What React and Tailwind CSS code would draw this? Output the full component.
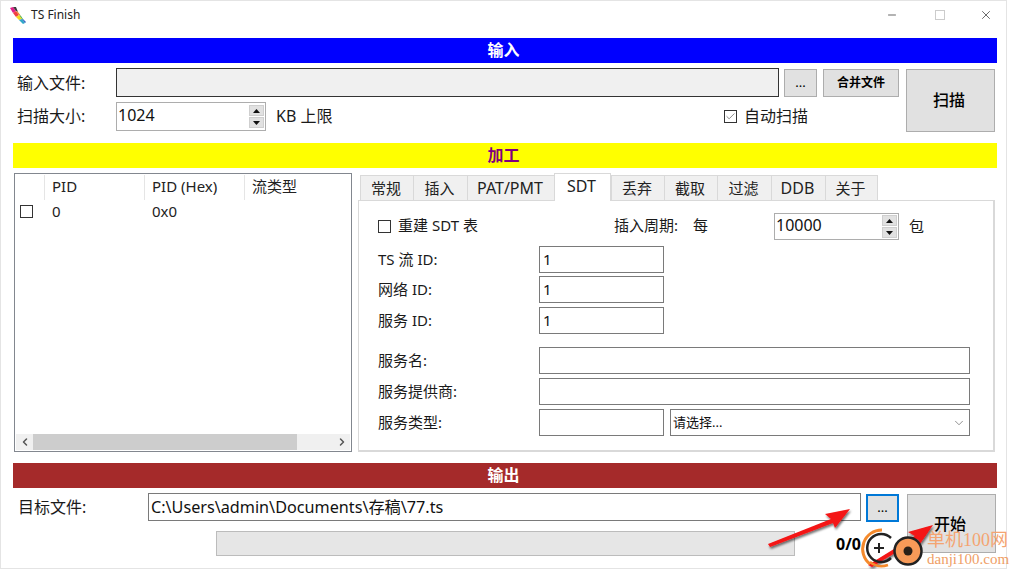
import React from 'react';
import { ChevronDown, ChevronLeft, ChevronRight, Check, Minus, X } from 'lucide-react';

const tabs = [
  { label: '常规', w: 'w-[53px]', size: 'text-[15px]' },
  { label: '插入', w: 'w-[54px]', size: 'text-[15px]' },
  { label: 'PAT/PMT', w: 'w-[87px]', size: 'text-[16px]' },
  { label: 'SDT', w: 'w-[57px]', size: 'text-[16px]', active: true },
  { label: '丢弃', w: 'w-[53px]', size: 'text-[15px]' },
  { label: '截取', w: 'w-[53px]', size: 'text-[15px]' },
  { label: '过滤', w: 'w-[54px]', size: 'text-[15px]' },
  { label: 'DDB', w: 'w-[54px]', size: 'text-[16px]' },
  { label: '关于', w: 'w-[53px]', size: 'text-[15px]' },
];

const SectionBar = ({ className, children }) => (
  <div className={`h-[25px] flex items-center justify-center pr-[3px] pb-[2px] text-[16px] font-bold ${className}`}>{children}</div>
);

const Logo = () => (
  <svg width="16" height="17" viewBox="0 0 16 17" className="shrink-0">
    <polygon points="0,1 3,0 6,4 3,6" fill="#e0218a" />
    <polygon points="3,0 6,0 8,5 6,4" fill="#3a3a3a" />
    <polygon points="3,6 6,4 9,8 6,10" fill="#f04040" />
    <polygon points="6,4 8,5 11,9 9,8" fill="#f08a20" />
    <polygon points="6,10 9,8 12,12 9,13" fill="#f5d820" />
    <polygon points="9,8 11,9 13,12 12,12" fill="#50b848" />
    <polygon points="9,13 12,12 15,16 13,17" fill="#30a8c8" />
    <polygon points="12,12 13,12 16,15 15,16" fill="#3060c0" />
  </svg>
);

const Arrow = ({ up }) => (
  <svg width="7" height="4" viewBox="0 0 7 4">
    <polygon points={up ? '3.5,0 7,4 0,4' : '0,0 7,0 3.5,4'} fill="#111" />
  </svg>
);

const Spinner = ({ value, w, h }) => (
  <div className={`${w} ${h} border border-[#adadad] bg-white flex items-center pl-px pr-px`}>
    <span className="flex-1 pb-[4px] text-[16px] text-[#111]">{value}</span>
    <div className="flex flex-col gap-px">
      <div className="w-[15px] h-[11px] bg-[#e1e1e1] border border-[#cfcfcf] flex items-center justify-center"><Arrow up /></div>
      <div className="w-[15px] h-[11px] bg-[#e1e1e1] border border-[#cfcfcf] flex items-center justify-center"><Arrow /></div>
    </div>
  </div>
);

const CheckBox = ({ checked }) => (
  <div className="w-[13px] h-[13px] border border-[#333] bg-white shrink-0 flex items-center justify-center">
    {checked && <Check size={11} strokeWidth={1.5} className="text-[#555]" />}
  </div>
);

const Btn = ({ className, children }) => (
  <div className={`bg-[#e1e1e1] border border-[#adadad] flex items-center justify-center text-black ${className}`}>{children}</div>
);

const FormRow = ({ label, className, children }) => (
  <div className={`flex items-center h-[27px] ${className || ''}`}>
    <span className="w-[161px] shrink-0 text-[15px] text-[#1a1a1a]">{label}</span>
    {children}
  </div>
);

const Field = ({ value, w }) => (
  <div className={`${w} h-[27px] border border-[#7a7a7a] bg-white pl-[3px] text-[15px] leading-[24px] text-[#111]`}>{value}</div>
);

const Watermark = () => (
  <div className="absolute left-[760px] top-[500px] w-[250px] h-[69px] pointer-events-none">
    <svg width="250" height="69" viewBox="0 0 250 69" className="absolute left-0 top-0">
      <defs>
        <filter id="shadow" x="-20%" y="-40%" width="140%" height="200%">
          <feDropShadow dx="1" dy="2" stdDeviation="1.2" floodColor="#000" floodOpacity="0.55" />
        </filter>
      </defs>
      <polygon points="8,44 71,19 65,14 90,9 75,28 73,23 10,47" fill="#f41414" filter="url(#shadow)" />
      <polygon points="108,65 155,36 148,32 173,25 160,44 158,39 112,67" fill="#f41414" filter="url(#shadow)" />
      <path d="M122 30 A19 19 0 0 0 110 64" fill="none" stroke="#f58a2c" strokeWidth="3" />
      <path d="M110 62 A19 19 0 0 0 128 65" fill="none" stroke="#f58a2c" strokeWidth="2.5" />
      <path d="M131 58 A14 14 0 1 1 131 38" fill="none" stroke="#222" strokeWidth="2.5" />
      <path d="M114 48 H124 M119 43 V53" stroke="#222" strokeWidth="2" />
      <circle cx="148" cy="51" r="13.5" fill="#f79a58" stroke="#222" strokeWidth="2.5" />
      <circle cx="148" cy="51" r="4.5" fill="#2a2018" />
    </svg>
    <span className="absolute left-[167px] top-[27px] text-[18px] leading-[26px] whitespace-nowrap text-[#f4a471] font-['Liberation_Serif','Noto_Sans_CJK_SC',serif]">单机100网</span>
    <span className="absolute left-[167px] top-[50px] text-[15px] leading-[18px] whitespace-nowrap text-[#ef9e66] font-['Liberation_Serif',serif]">danji100.com</span>
  </div>
);

export default function App() {
  return (
    <div className="relative w-[1010px] h-[569px] overflow-hidden bg-white font-['Noto_Sans','Noto_Sans_CJK_SC',sans-serif]">
      <div className="w-[1007px] h-[569px] border border-[#e4e4e4] bg-white">
        {/* title bar */}
        <div className="h-[37px] flex items-start">
          <div className="flex items-center pl-[9px] pt-[5px]">
            <Logo />
            <span className="ml-[5px] text-[12px] text-[#222]">TS Finish</span>
          </div>
          <div className="ml-auto flex items-center pt-[7px] pr-[13px]">
            <Minus size={12} strokeWidth={1.2} className="text-black" />
            <div className="ml-[37px] w-[10px] h-[10px] border border-[#cccccc]" />
            <X size={14} strokeWidth={1} className="ml-[34px] text-black" />
          </div>
        </div>

        <div className="ml-[12px] w-[984px]">
          <SectionBar className="bg-[#0000ff] text-white">输入</SectionBar>

          <div className="flex mt-[5px]">
            <div className="w-[886px]">
              <div className="flex items-center h-[29px]">
                <span className="w-[103px] pl-[4px] text-[16px] text-[#1a1a1a]">输入文件:</span>
                <div className="w-[663px] h-[29px] border border-[#333] bg-[#f0f0f0]" />
                <Btn className="ml-[5px] w-[33px] h-[28px] text-[13px]">...</Btn>
                <Btn className="ml-[6px] w-[76px] h-[28px] text-[12px] font-bold">合并文件</Btn>
              </div>
              <div className="flex items-center h-[29px] mt-[5px]">
                <span className="w-[103px] pl-[4px] pb-[2px] text-[16px] text-[#1a1a1a]">扫描大小:</span>
                <Spinner value="1024" w="w-[150px]" h="h-[29px]" />
                <span className="ml-[10px] pb-[2px] text-[16px] text-[#1a1a1a]">KB 上限</span>
                <div className="ml-auto mr-[91px] flex items-center">
                  <CheckBox checked />
                  <span className="ml-[7px] pb-[2px] text-[16px] text-[#1a1a1a]">自动扫描</span>
                </div>
              </div>
            </div>
            <Btn className="ml-[7px] mt-px w-[89px] h-[63px] pr-[3px] pb-[2px] text-[16px] font-medium">扫描</Btn>
          </div>

          <SectionBar className="mt-[11px] bg-[#ffff00] text-[#800080]">加工</SectionBar>

          <div className="flex mt-[5px]">
            {/* stream list */}
            <div className="ml-px w-[338px] h-[279px] border border-[#82878f] bg-white flex flex-col">
              <div className="flex h-[25px] mt-px text-[15px] text-[#222] items-center">
                <div className="w-[30px] h-full border-r border-[#e5e5e5]" />
                <div className="w-[100px] h-full pl-[7px] pb-[2px] flex items-center border-r border-[#e5e5e5]">PID</div>
                <div className="w-[100px] h-full pl-[7px] pb-[2px] flex items-center border-r border-[#e5e5e5]">PID (Hex)</div>
                <div className="pl-[7px] pb-[2px]">流类型</div>
              </div>
              <div className="flex items-center h-[22px] text-[15px] text-[#222]">
                <div className="w-[30px] pl-[5px]"><CheckBox /></div>
                <div className="w-[100px] pl-[7px]">0</div>
                <div className="w-[100px] pl-[7px]">0x0</div>
              </div>
              <div className="flex-1" />
              <div className="mx-px mb-px h-[16px] bg-[#f0f0f0] flex items-center">
                <div className="w-[17px] flex justify-center"><ChevronLeft size={12} strokeWidth={3} className="text-[#555]" /></div>
                <div className="w-[264px] h-full bg-[#cdcdcd]" />
                <div className="ml-auto w-[17px] flex justify-center"><ChevronRight size={12} strokeWidth={3} className="text-[#555]" /></div>
              </div>
            </div>

            {/* tabs */}
            <div className="ml-[6px] w-[637px]">
              <div className="flex items-end h-[27px] pl-[2px] relative z-10">
                {tabs.map(t => (
                  <div
                    key={t.label}
                    className={`${t.w} ${t.size} flex items-center justify-center pr-[2px] text-[#222] border-t border-l border-[#d9d9d9] last:border-r ${t.active ? 'h-[28px] -mb-px bg-white border-r pb-[4px]' : 'h-[25px] bg-[#f0f0f0]'}`}
                  >
                    {t.label}
                  </div>
                ))}
              </div>
              <div className="h-[252px] border border-[#d9d9d9] border-r-2 border-b-2 pl-[19px] pt-[12px] bg-white">
                <div className="flex items-center h-[27px]">
                  <CheckBox />
                  <span className="ml-[7px] w-[216px] shrink-0 pb-[2px] text-[15px] text-[#1a1a1a]">重建 SDT 表</span>
                  <span className="w-[79px] shrink-0 pb-[2px] text-[15px] text-[#1a1a1a]">插入周期:</span>
                  <span className="w-[81px] shrink-0 pb-[2px] text-[15px] text-[#1a1a1a]">每</span>
                  <Spinner value="10000" w="w-[125px]" h="h-[27px]" />
                  <span className="ml-[10px] text-[15px] text-[#1a1a1a]">包</span>
                </div>
                <FormRow label="TS 流 ID:" className="mt-[6px]"><Field value="1" w="w-[125px]" /></FormRow>
                <FormRow label="网络 ID:" className="mt-[3px]"><Field value="1" w="w-[125px]" /></FormRow>
                <FormRow label="服务 ID:" className="mt-[4px]"><Field value="1" w="w-[125px]" /></FormRow>
                <FormRow label="服务名:" className="mt-[13px]"><Field w="w-[431px]" /></FormRow>
                <FormRow label="服务提供商:" className="mt-[4px]"><Field w="w-[431px]" /></FormRow>
                <FormRow label="服务类型:" className="mt-[4px]">
                  <Field w="w-[125px]" />
                  <div className="ml-[6px] w-[300px] h-[27px] border border-[#7a7a7a] bg-white flex items-center pl-[2px] pr-[3px] text-[13px] text-[#111]">
                    请选择...
                    <ChevronDown size={14} strokeWidth={1} className="ml-auto text-[#444]" />
                  </div>
                </FormRow>
              </div>
            </div>
          </div>

          <SectionBar className="mt-[11px] bg-[#a52a2a] text-white">输出</SectionBar>

          <div className="flex mt-[5px]">
            <div className="w-[886px]">
              <div className="flex items-start">
                <span className="w-[135px] pl-[5px] h-[28px] leading-[28px] text-[16px] text-[#1a1a1a]">目标文件:</span>
                <div className="w-[713px] h-[28px] border border-[#7a7a7a] bg-white pl-[2px] text-[16.2px] leading-[26px] text-[#111]">C:\Users\admin\Documents\存稿\77.ts</div>
                <Btn className="ml-[5px] mt-px w-[33px] h-[28px] !border-2 !border-[#0078d7] text-[13px]">...</Btn>
              </div>
              <div className="flex items-center mt-[9px] pl-[203px]">
                <div className="w-[579px] h-[25px] bg-[#e6e6e6] border border-[#bcbcbc]" />
                <span className="ml-[41px] text-[16px] font-bold text-black">0/0</span>
              </div>
            </div>
            <Btn className="ml-[8px] mt-px w-[89px] h-[59px] pr-[3px] text-[16px] font-medium">开始</Btn>
          </div>
        </div>
      </div>
      <Watermark />
    </div>
  );
}
